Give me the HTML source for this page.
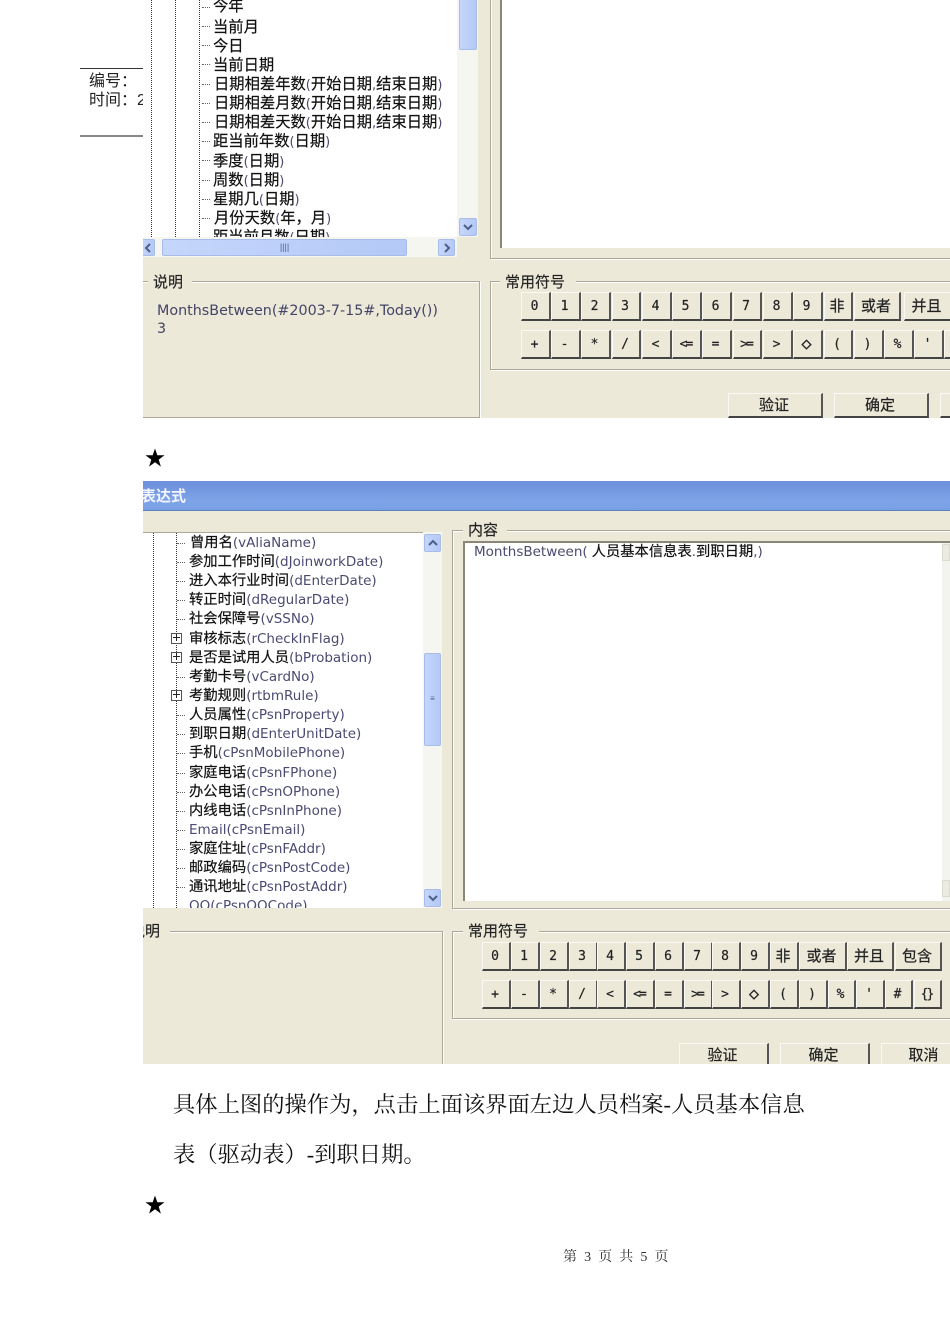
<!DOCTYPE html>
<html lang="zh"><head><meta charset="utf-8"><title>第3页</title>
<style>
html,body{margin:0;padding:0;background:#fff}
#p{position:relative;width:950px;height:1344px;overflow:hidden;background:#fff;font-family:"Liberation Sans","WenQuanYi Zen Hei","Noto Sans CJK SC",sans-serif;color:#111}
#p div,#p svg{position:absolute}
.x{overflow:hidden}
.t{white-space:nowrap;font-size:15.3px;line-height:19px;height:19px;color:#111;margin-top:1px;-webkit-text-stroke:.2px #111}
.t i{font-style:normal;color:#4a4a72;font-family:"DejaVu Sans",sans-serif;font-size:12.9px;-webkit-text-stroke:0}
.q .t{font-size:14.3px}
.q .t i{font-size:13.5px}
.g{border:1px solid #aca899;box-shadow:inset 1px 1px 0 #fff,1px 1px 0 #fff;box-sizing:border-box}
.l{background:#ece9d8;padding:0 9px 0 5px;font-size:15px;line-height:18px;color:#222;white-space:nowrap;margin-top:1px;-webkit-text-stroke:.15px #222}
.b{background:#ece9d8;box-sizing:border-box;border-right:2px solid #555;border-bottom:2px solid #444;border-top:1px solid #faf9f3;border-left:1px solid #faf9f3;text-align:center;font-size:13px;color:#222;line-height:27px;text-indent:-2px;font-family:"DejaVu Sans Mono","WenQuanYi Zen Hei",monospace;white-space:nowrap;-webkit-text-stroke:.2px #222}
.b.c{font-family:"Liberation Sans","WenQuanYi Zen Hei",sans-serif;font-size:15px}
.s{background:linear-gradient(90deg,#c5d6fb,#b4c9f7);border:1px solid #a8bcea;border-radius:2px;box-sizing:border-box;text-align:center;color:#4d6185;font-size:9px}
.s svg{left:2px;top:3px}
.d{width:0;border-left:1px dotted #333}
.h{height:0;width:8px;border-top:1px dotted #666}
.m{font-family:"Liberation Serif","Noto Serif CJK SC",serif;font-size:22.3px;line-height:28px;color:#111;white-space:nowrap}
</style></head><body><div id="p">

<div style="left:80px;top:68px;width:63px;height:1px;background:#333"></div>
<div style="left:80px;top:135px;width:63px;height:2px;background:#888"></div>
<div class="x" style="left:89px;top:72px;width:54px;height:40px;font-size:16px;line-height:19px;color:#222;white-space:nowrap">编号：<br>时间：2</div>

<!-- first dialog -->
<div class="x" style="left:143px;top:0;width:807px;height:418px;background:#ece9d8">
  <div style="left:0;top:0;width:314px;height:237px;background:#fff"></div>
  <div style="left:314px;top:0;width:21px;height:237px;background:#f6f6f1"></div>
  <div class="s" style="left:316px;top:-4px;width:18px;height:54px"></div>
  <div class="s" style="left:316px;top:218px;width:18px;height:18px"><svg width="12" height="10" viewBox="0 0 12 10"><path d="M2 3l4 4 4-4" fill="none" stroke="#4d6185" stroke-width="2"/></svg></div>
  <div style="left:0;top:237px;width:314px;height:20px;background:#f6f6f1"></div>
  <div class="s" style="left:-4px;top:239px;width:16px;height:17px"><svg width="12" height="10" viewBox="0 0 12 10"><path d="M8 1L4 5l4 4" fill="none" stroke="#4d6185" stroke-width="2"/></svg></div>
  <div class="s" style="left:19px;top:239px;width:245px;height:17px;line-height:15px;font-size:9px">||||</div>
  <div class="s" style="left:295px;top:239px;width:17px;height:17px"><svg width="12" height="10" viewBox="0 0 12 10"><path d="M4 1l4 4-4 4" fill="none" stroke="#4d6185" stroke-width="2"/></svg></div>
  <div class="d" style="left:8px;top:0;height:237px"></div>
  <div class="d" style="left:32px;top:0;height:237px"></div>
  <div class="d" style="left:56px;top:0;height:237px"></div>
  <div class="x" style="left:57px;top:0;width:257px;height:237px">
    <div class="h" style="left:2px;top:7px"></div><div class="t" style="left:13px;top:-4px">今年</div>
    <div class="h" style="left:2px;top:26px"></div><div class="t" style="left:13px;top:17px">当前月</div>
    <div class="h" style="left:2px;top:45px"></div><div class="t" style="left:13px;top:36px">今日</div>
    <div class="h" style="left:2px;top:64px"></div><div class="t" style="left:13px;top:55px">当前日期</div>
    <div class="h" style="left:2px;top:84px"></div><div class="t" style="left:14px;top:74px">日期相差年数<i>(</i>开始日期<i>,</i>结束日期<i>)</i></div>
    <div class="h" style="left:2px;top:103px"></div><div class="t" style="left:14px;top:93px">日期相差月数<i>(</i>开始日期<i>,</i>结束日期<i>)</i></div>
    <div class="h" style="left:2px;top:122px"></div><div class="t" style="left:14px;top:112px">日期相差天数<i>(</i>开始日期<i>,</i>结束日期<i>)</i></div>
    <div class="h" style="left:2px;top:141px"></div><div class="t" style="left:13px;top:131px">距当前年数<i>(</i>日期<i>)</i></div>
    <div class="h" style="left:2px;top:160px"></div><div class="t" style="left:13px;top:151px">季度<i>(</i>日期<i>)</i></div>
    <div class="h" style="left:2px;top:180px"></div><div class="t" style="left:13px;top:170px">周数<i>(</i>日期<i>)</i></div>
    <div class="h" style="left:2px;top:199px"></div><div class="t" style="left:13px;top:189px">星期几<i>(</i>日期<i>)</i></div>
    <div class="h" style="left:2px;top:218px"></div><div class="t" style="left:14px;top:208px">月份天数<i>(</i>年，月<i>)</i></div>
    <div class="t" style="left:13px;top:227px">距当前月数<i>(</i>日期<i>)</i></div>
  </div>
  <div class="g" style="left:347px;top:-4px;width:470px;height:263px"></div>
  <div style="left:357px;top:0;width:450px;height:248px;background:#fff;border-left:2px solid #8a8778;box-sizing:border-box"></div>
  <div class="g" style="left:-6px;top:281px;width:343px;height:137px"></div>
  <div class="l" style="left:5px;top:273px">说明</div>
  <div style="left:14px;top:302px;font-family:'DejaVu Sans',sans-serif;font-size:14.3px;line-height:18px;color:#444466;white-space:nowrap">MonthsBetween(#2003-7-15#,Today())<br>3</div>
  <div class="g" style="left:347px;top:281px;width:470px;height:89px"></div>
  <div class="l" style="left:357px;top:273px;padding-right:11px">常用符号</div>
  <div class="b" style="left:378px;top:292px;width:30px;height:29px">0</div>
  <div class="b" style="left:408px;top:292px;width:30px;height:29px">1</div>
  <div class="b" style="left:438px;top:292px;width:30px;height:29px">2</div>
  <div class="b" style="left:469px;top:292px;width:29px;height:29px">3</div>
  <div class="b" style="left:499px;top:292px;width:30px;height:29px">4</div>
  <div class="b" style="left:529px;top:292px;width:30px;height:29px">5</div>
  <div class="b" style="left:559px;top:292px;width:30px;height:29px">6</div>
  <div class="b" style="left:590px;top:292px;width:29px;height:29px">7</div>
  <div class="b" style="left:620px;top:292px;width:30px;height:29px">8</div>
  <div class="b" style="left:650px;top:292px;width:30px;height:29px">9</div>
  <div class="b c" style="left:681px;top:292px;width:29px;height:29px">非</div>
  <div class="b c" style="left:711px;top:292px;width:47px;height:29px">或者</div>
  <div class="b c" style="left:761px;top:292px;width:48px;height:29px">并且</div>
  <div class="b" style="left:378px;top:330px;width:30px;height:29px">+</div>
  <div class="b" style="left:408px;top:330px;width:30px;height:29px">-</div>
  <div class="b" style="left:438px;top:330px;width:30px;height:29px">*</div>
  <div class="b" style="left:469px;top:330px;width:29px;height:29px">/</div>
  <div class="b" style="left:499px;top:330px;width:30px;height:29px">&lt;</div>
  <div class="b" style="left:529px;top:330px;width:30px;height:29px;letter-spacing:-2px">&lt;=</div>
  <div class="b" style="left:559px;top:330px;width:30px;height:29px">=</div>
  <div class="b" style="left:590px;top:330px;width:29px;height:29px;letter-spacing:-2px">&gt;=</div>
  <div class="b" style="left:620px;top:330px;width:30px;height:29px">&gt;</div>
  <div class="b" style="left:650px;top:330px;width:30px;height:29px;font-size:17px">◇</div>
  <div class="b" style="left:681px;top:330px;width:29px;height:29px">(</div>
  <div class="b" style="left:711px;top:330px;width:30px;height:29px">)</div>
  <div class="b" style="left:741px;top:330px;width:30px;height:29px">%</div>
  <div class="b" style="left:771px;top:330px;width:30px;height:29px">'</div>
  <div class="b" style="left:801px;top:330px;width:30px;height:29px"></div>
  <div class="b c" style="left:585px;top:393px;width:95px;height:25px;line-height:23px">验证</div>
  <div class="b c" style="left:691px;top:393px;width:95px;height:25px;line-height:23px">确定</div>
  <div class="b c" style="left:797px;top:393px;width:95px;height:25px"></div>
</div>

<svg style="left:145px;top:448px" width="20" height="20" viewBox="0 0 20 20"><polygon fill="#000" points="10,0.5 12.3,7.3 19.5,7.3 13.7,11.6 15.9,18.6 10,14.3 4.1,18.6 6.3,11.6 0.5,7.3 7.7,7.3"/></svg>

<!-- second dialog -->
<div class="x q" style="left:143px;top:481px;width:807px;height:583px;background:#ece9d8">
  <div style="left:0;top:0;width:807px;height:30px;background:linear-gradient(180deg,#6c8fd9 0,#7ea4e8 70%,#7a9fe4 100%);border-bottom:1px solid #5f7fc4;box-sizing:border-box"></div>
  <div style="left:-2px;top:7px;color:#f2f5ff;font-size:15px;font-weight:bold;line-height:18px;white-space:nowrap">表达式</div>
  <div style="left:0;top:51px;width:280px;height:376px;background:#fff;border-top:1px solid #aca899;box-sizing:border-box"></div>
  <div style="left:280px;top:51px;width:19px;height:376px;background:#f6f6f1"></div>
  <div class="s" style="left:281px;top:53px;width:17px;height:18px"><svg width="12" height="10" viewBox="0 0 12 10"><path d="M2 7l4-4 4 4" fill="none" stroke="#4d6185" stroke-width="2"/></svg></div>
  <div class="s" style="left:281px;top:172px;width:17px;height:93px;line-height:90px;font-size:8px">≡</div>
  <div class="s" style="left:281px;top:408px;width:17px;height:18px"><svg width="12" height="10" viewBox="0 0 12 10"><path d="M2 3l4 4 4-4" fill="none" stroke="#4d6185" stroke-width="2"/></svg></div>
  <div class="d" style="left:10px;top:52px;height:375px"></div>
  <div class="d" style="left:33px;top:52px;height:375px"></div>
  <div class="x" style="left:28px;top:52px;width:252px;height:375px">
    <div class="h" style="left:6px;top:10px"></div><div class="t" style="left:19px;top:0px">曾用名<i>(vAliaName)</i></div>
    <div class="h" style="left:6px;top:29px"></div><div class="t" style="left:18px;top:19px">参加工作时间<i>(dJoinworkDate)</i></div>
    <div class="h" style="left:6px;top:48px"></div><div class="t" style="left:18px;top:38px">进入本行业时间<i>(dEnterDate)</i></div>
    <div class="h" style="left:6px;top:67px"></div><div class="t" style="left:18px;top:57px">转正时间<i>(dRegularDate)</i></div>
    <div class="h" style="left:6px;top:86px"></div><div class="t" style="left:18px;top:76px">社会保障号<i>(vSSNo)</i></div>
    <div class="t" style="left:18px;top:96px">审核标志<i>(rCheckInFlag)</i></div>
    <div class="t" style="left:18px;top:115px">是否是试用人员<i>(bProbation)</i></div>
    <div class="h" style="left:6px;top:144px"></div><div class="t" style="left:18px;top:134px">考勤卡号<i>(vCardNo)</i></div>
    <div class="t" style="left:18px;top:153px">考勤规则<i>(rtbmRule)</i></div>
    <div class="h" style="left:6px;top:182px"></div><div class="t" style="left:18px;top:172px">人员属性<i>(cPsnProperty)</i></div>
    <div class="h" style="left:6px;top:201px"></div><div class="t" style="left:18px;top:191px">到职日期<i>(dEnterUnitDate)</i></div>
    <div class="h" style="left:6px;top:220px"></div><div class="t" style="left:18px;top:210px">手机<i>(cPsnMobilePhone)</i></div>
    <div class="h" style="left:6px;top:240px"></div><div class="t" style="left:18px;top:230px">家庭电话<i>(cPsnFPhone)</i></div>
    <div class="h" style="left:6px;top:259px"></div><div class="t" style="left:18px;top:249px">办公电话<i>(cPsnOPhone)</i></div>
    <div class="h" style="left:6px;top:278px"></div><div class="t" style="left:18px;top:268px">内线电话<i>(cPsnInPhone)</i></div>
    <div class="h" style="left:6px;top:297px"></div><div class="t" style="left:18px;top:287px"><i>Email(cPsnEmail)</i></div>
    <div class="h" style="left:6px;top:316px"></div><div class="t" style="left:18px;top:306px">家庭住址<i>(cPsnFAddr)</i></div>
    <div class="h" style="left:6px;top:335px"></div><div class="t" style="left:18px;top:325px">邮政编码<i>(cPsnPostCode)</i></div>
    <div class="h" style="left:6px;top:354px"></div><div class="t" style="left:18px;top:344px">通讯地址<i>(cPsnPostAddr)</i></div>
    <div class="t" style="left:18px;top:363px"><i>QQ(cPsnQQCode)</i></div>
  </div>
  <div style="left:28px;top:152px;width:9px;height:9px;background:#fff;border:1px solid #555"></div>
  <div style="left:30px;top:156px;width:7px;height:1px;background:#222"></div><div style="left:33px;top:153px;width:1px;height:7px;background:#222"></div>
  <div style="left:28px;top:171px;width:9px;height:9px;background:#fff;border:1px solid #555"></div>
  <div style="left:30px;top:175px;width:7px;height:1px;background:#222"></div><div style="left:33px;top:172px;width:1px;height:7px;background:#222"></div>
  <div style="left:28px;top:209px;width:9px;height:9px;background:#fff;border:1px solid #555"></div>
  <div style="left:30px;top:213px;width:7px;height:1px;background:#222"></div><div style="left:33px;top:210px;width:1px;height:7px;background:#222"></div>

  <div class="g" style="left:309px;top:49px;width:510px;height:379px"></div>
  <div class="l" style="left:320px;top:40px">内容</div>
  <div style="left:320px;top:60px;width:487px;height:360px;background:#fff;border-left:2px solid #8a8778;border-top:2px solid #8a8778;box-sizing:border-box"></div>
  <div style="left:799px;top:62px;width:8px;height:358px;background:#f4f4ee"></div>
  <div style="left:799px;top:63px;width:8px;height:17px;background:#ecebe2;border:1px solid #dcdbd0;box-sizing:border-box"></div>
  <div style="left:799px;top:399px;width:8px;height:17px;background:#ecebe2;border:1px solid #dcdbd0;box-sizing:border-box"></div>
  <div class="t" style="left:331px;top:61px"><i>MonthsBetween(</i> 人员基本信息表<i>.</i>到职日期<i>,)</i></div>
  <div class="g" style="left:-6px;top:450px;width:306px;height:140px"></div>
  <div class="x" style="left:0;top:441px;width:27px;height:20px;background:#ece9d8"><div class="l" style="left:-18px;top:0">说明</div></div>
  <div class="g" style="left:309px;top:450px;width:510px;height:88px"></div>
  <div class="l" style="left:320px;top:441px;padding-right:11px">常用符号</div>
  <div class="b" style="left:339px;top:461px;width:29px;height:29px">0</div>
  <div class="b" style="left:368px;top:461px;width:29px;height:29px">1</div>
  <div class="b" style="left:397px;top:461px;width:29px;height:29px">2</div>
  <div class="b" style="left:426px;top:461px;width:29px;height:29px">3</div>
  <div class="b" style="left:454px;top:461px;width:29px;height:29px">4</div>
  <div class="b" style="left:483px;top:461px;width:29px;height:29px">5</div>
  <div class="b" style="left:512px;top:461px;width:29px;height:29px">6</div>
  <div class="b" style="left:541px;top:461px;width:29px;height:29px">7</div>
  <div class="b" style="left:569px;top:461px;width:29px;height:29px">8</div>
  <div class="b" style="left:598px;top:461px;width:29px;height:29px">9</div>
  <div class="b c" style="left:627px;top:461px;width:29px;height:29px">非</div>
  <div class="b c" style="left:656px;top:461px;width:48px;height:29px">或者</div>
  <div class="b c" style="left:704px;top:461px;width:47px;height:29px">并且</div>
  <div class="b c" style="left:752px;top:461px;width:47px;height:29px">包含</div>
  <div class="b" style="left:339px;top:499px;width:29px;height:29px">+</div>
  <div class="b" style="left:368px;top:499px;width:29px;height:29px">-</div>
  <div class="b" style="left:397px;top:499px;width:29px;height:29px">*</div>
  <div class="b" style="left:426px;top:499px;width:29px;height:29px">/</div>
  <div class="b" style="left:454px;top:499px;width:29px;height:29px">&lt;</div>
  <div class="b" style="left:483px;top:499px;width:29px;height:29px;letter-spacing:-2px">&lt;=</div>
  <div class="b" style="left:512px;top:499px;width:29px;height:29px">=</div>
  <div class="b" style="left:541px;top:499px;width:29px;height:29px;letter-spacing:-2px">&gt;=</div>
  <div class="b" style="left:569px;top:499px;width:29px;height:29px">&gt;</div>
  <div class="b" style="left:598px;top:499px;width:29px;height:29px;font-size:17px">◇</div>
  <div class="b" style="left:627px;top:499px;width:29px;height:29px">(</div>
  <div class="b" style="left:656px;top:499px;width:29px;height:29px">)</div>
  <div class="b" style="left:685px;top:499px;width:28px;height:29px">%</div>
  <div class="b" style="left:713px;top:499px;width:29px;height:29px">'</div>
  <div class="b" style="left:742px;top:499px;width:28px;height:29px">#</div>
  <div class="b" style="left:771px;top:499px;width:28px;height:29px;letter-spacing:-2px">{}</div>
  <div class="b c" style="left:536px;top:562px;width:90px;height:30px;line-height:23px">验证</div>
  <div class="b c" style="left:637px;top:562px;width:90px;height:30px;line-height:23px">确定</div>
  <div class="b c" style="left:738px;top:562px;width:90px;height:30px;line-height:23px;text-indent:-4px">取消</div>
</div>

<div class="m" style="left:173px;top:1091px">具体上图的操作为，点击上面该界面左边人员档案-人员基本信息</div>
<div class="m" style="left:173px;top:1141px">表（驱动表）-到职日期。</div>
<svg style="left:145px;top:1195px" width="20" height="20" viewBox="0 0 20 20"><polygon fill="#000" points="10,0.5 12.3,7.3 19.5,7.3 13.7,11.6 15.9,18.6 10,14.3 4.1,18.6 6.3,11.6 0.5,7.3 7.7,7.3"/></svg>
<div style="left:563px;top:1249px;font-family:'Liberation Serif','Noto Serif CJK SC',serif;font-size:14px;line-height:18px;color:#333;white-space:pre;letter-spacing:1.8px">第 3 页 共 5 页</div>
</div></body></html>
